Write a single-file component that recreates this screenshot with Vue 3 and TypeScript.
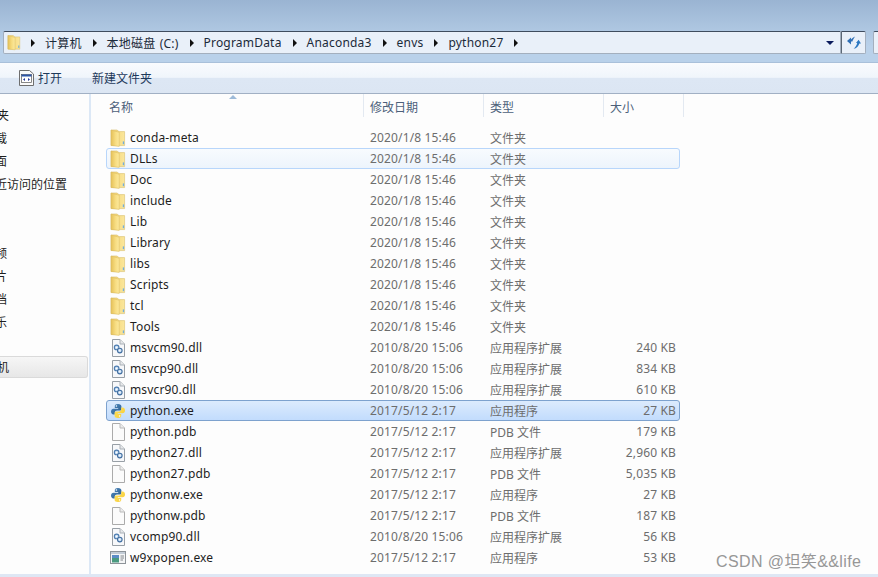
<template>
  <div class="explorer">
    <svg class="sprite" width="0" height="0" aria-hidden="true">
      <defs>
        <linearGradient id="folderFront" x1="0" y1="0" x2="1" y2="0">
          <stop offset="0" stop-color="#e6c25a" />
          <stop offset="0.55" stop-color="#f7dd82" />
          <stop offset="1" stop-color="#fdea9e" />
        </linearGradient>
        <linearGradient id="folderBack" x1="0" y1="0" x2="1" y2="0">
          <stop offset="0" stop-color="#f3d26f" />
          <stop offset="1" stop-color="#fbe79c" />
        </linearGradient>
        <linearGradient id="pyBlue" x1="0" y1="0" x2="1" y2="1">
          <stop offset="0" stop-color="#4f8cc2" />
          <stop offset="1" stop-color="#2c5a8a" />
        </linearGradient>
        <linearGradient id="pyYellow" x1="0" y1="0" x2="1" y2="1">
          <stop offset="0" stop-color="#f6cb35" />
          <stop offset="1" stop-color="#ffe25e" />
        </linearGradient>
      </defs>
      <symbol id="ic-folder" viewBox="0 0 16 18">
        <path d="M1 1 H7 L9 2.6 H14.6 V16.6 H1 Z" fill="url(#folderBack)" stroke="#d8bd6c" stroke-width=".6" />
        <path d="M1.2 1.2 L9.2 3.2 V17.4 L1.2 16.4 Z" fill="url(#folderFront)" stroke="#d9b95c" stroke-width=".5" />
        <rect x="12.8" y="12.4" width="1.3" height="2.8" fill="#73aedb" />
      </symbol>
      <symbol id="ic-page" viewBox="0 0 16 18">
        <path d="M2.5 .5 H10 L14.5 5 V17.5 H2.5 Z" fill="#fbfbfb" stroke="#ababab" />
        <path d="M10 .5 V5 H14.5" fill="#ececec" stroke="#bababa" />
      </symbol>
      <symbol id="ic-dll" viewBox="0 0 16 18">
        <path d="M2.5 .5 H10 L14.5 5 V17.5 H2.5 Z" fill="#f7f8fa" stroke="#989fa6" />
        <path d="M10 .5 V5 H14.5" fill="#e6e8ea" stroke="#aab0b6" />
        <circle cx="6.6" cy="8.4" r="2.3" fill="#cfe2f5" stroke="#4d7cb0" stroke-width="1.1" />
        <circle cx="9.8" cy="11.6" r="2.3" fill="#cfe2f5" stroke="#416ea0" stroke-width="1.1" />
        <circle cx="6.6" cy="8.4" r=".7" fill="#fff" />
        <circle cx="9.8" cy="11.6" r=".7" fill="#fff" />
      </symbol>
      <symbol id="ic-python" viewBox="0 0 16 16">
        <path d="M8 1 C5.2 1 4.8 2.2 4.8 3.4 V5 H8.2 V5.7 H3.4 C2 5.7 1 6.8 1 8.5 C1 10.3 2 11.4 3.3 11.4 H4.8 V9.8 C4.8 8.5 5.8 7.6 7 7.6 H9.8 C10.8 7.6 11.4 6.9 11.4 6 V3.3 C11.4 2 10.2 1 8 1 Z" fill="url(#pyBlue)" />
        <path transform="rotate(180 8 8)" d="M8 1 C5.2 1 4.8 2.2 4.8 3.4 V5 H8.2 V5.7 H3.4 C2 5.7 1 6.8 1 8.5 C1 10.3 2 11.4 3.3 11.4 H4.8 V9.8 C4.8 8.5 5.8 7.6 7 7.6 H9.8 C10.8 7.6 11.4 6.9 11.4 6 V3.3 C11.4 2 10.2 1 8 1 Z" fill="url(#pyYellow)" />
        <circle cx="6.4" cy="3" r=".8" fill="#fff" />
        <circle cx="9.6" cy="13" r=".8" fill="#fff" />
      </symbol>
      <symbol id="ic-window" viewBox="0 0 16 13">
        <rect x=".5" y=".5" width="15" height="12" fill="#f4f5f6" stroke="#8d9399" />
        <rect x="1" y="1" width="14" height="2" fill="#c3ccd6" />
        <rect x="2" y="4" width="7" height="7.5" fill="#4a9a80" />
        <rect x="2" y="4" width="7" height="3" fill="#5a8cc6" />
        <path d="M10.5 5 H14 M10.5 7 H14 M10.5 9 H13" stroke="#747a80" stroke-width=".9" />
      </symbol>
    </svg>

    <header class="title-bar">
      <div class="address-row">
        <div class="address">
          <svg class="addr-folder"><use href="#ic-folder" /></svg>
          <template v-for="crumb in crumbs" :key="crumb">
            <span class="crumb-arrow"></span>
            <span class="crumb">{{ crumb }}</span>
          </template>
          <span class="crumb-arrow"></span>
          <span class="addr-drop"></span>
        </div>
        <div class="refresh">
          <svg width="16" height="15" viewBox="0 0 16 15">
            <path d="M1 6 L5 2.4 V4.6 C6 3.6 7 2.6 9 1.6 C7.6 3.6 7 5 6.4 6.6 L5 6.4 V9.6 Z" fill="#2f6fb5" />
            <path d="M15 8.4 L12.6 4.8 L10 8 H11.2 C10.8 10 9.6 12 7.6 13.8 C10.6 13.2 12.6 11 13.4 8.4 Z" fill="#2b78c2" />
          </svg>
        </div>
        <div class="search"></div>
      </div>
    </header>

    <div class="toolbar">
      <span class="tool">
        <svg width="15" height="16" viewBox="0 0 15 16">
          <path d="M.5 .5 H10.5 L14.5 4 V15.5 H.5 Z" fill="#fafafa" stroke="#6e6e6e" />
          <rect x="2.5" y="4.5" width="10" height="8" fill="#fff" stroke="#555" stroke-width=".7" />
          <rect x="2.5" y="4.5" width="10" height="2" fill="#2d56a8" />
          <path d="M4 9.5 L6 8 V11 Z M11 9.5 L9 8 V11 Z" fill="#26389a" />
        </svg>
        打开
      </span>
      <span class="tool tool-new">新建文件夹</span>
    </div>

    <div class="body">
      <nav class="sidebar">
        <div
          v-for="item in navItems"
          :key="item.label"
          class="nav-item"
          :class="{ 'nav-sub': item.sub, 'nav-current': item.current, 'nav-gap': item.gap }"
        >
          <span>{{ item.label }}</span>
        </div>
      </nav>

      <main class="files">
        <div class="columns">
          <span class="sort-arrow"></span>
          <span class="col col-name">名称</span>
          <span class="col">修改日期</span>
          <span class="col">类型</span>
          <span class="col">大小</span>
        </div>
        <div class="rows">
          <div
            v-for="file in files"
            :key="file.name"
            class="row"
            :class="{ hover: file.name === 'DLLs', selected: file.name === 'python.exe' }"
          >
            <span class="cell-name">
              <svg class="file-icon" :class="'icon-' + file.icon"><use :href="'#ic-' + file.icon" /></svg>
              <span class="file-name">{{ file.name }}</span>
            </span>
            <span class="cell-num">{{ file.date }}</span>
            <span>{{ file.type }}</span>
            <span class="cell-num cell-size">{{ file.size }}</span>
          </div>
        </div>
      </main>
    </div>

    <div class="bottom-strip"></div>
    <div class="watermark">CSDN @坦笑&amp;&amp;life</div>
  </div>
</template>

<script setup lang="ts">
interface NavItem {
  label: string;
  sub?: boolean;
  current?: boolean;
  gap?: boolean;
}

interface FileRow {
  name: string;
  date: string;
  type: string;
  size: string;
  icon: string;
}

const crumbs = ["计算机", "本地磁盘 (C:)", "ProgramData", "Anaconda3", "envs", "python27"];

const navItems: NavItem[] = [
  { label: "收藏夹" },
  { label: "下载", sub: true },
  { label: "桌面", sub: true },
  { label: "最近访问的位置", sub: true },
  { label: "视频", sub: true, gap: true },
  { label: "图片", sub: true },
  { label: "文档", sub: true },
  { label: "音乐", sub: true },
  { label: "计算机", current: true }
];

const folder = (name: string): FileRow => ({
  name,
  date: "2020/1/8 15:46",
  type: "文件夹",
  size: "",
  icon: "folder"
});

const dll = (name: string, size: string): FileRow => ({
  name,
  date: "2010/8/20 15:06",
  type: "应用程序扩展",
  size,
  icon: "dll"
});

const py = "2017/5/12 2:17";

const files: FileRow[] = [
  ...["conda-meta", "DLLs", "Doc", "include", "Lib", "Library", "libs", "Scripts", "tcl", "Tools"].map(folder),
  dll("msvcm90.dll", "240 KB"),
  dll("msvcp90.dll", "834 KB"),
  dll("msvcr90.dll", "610 KB"),
  { name: "python.exe", date: py, type: "应用程序", size: "27 KB", icon: "python" },
  { name: "python.pdb", date: py, type: "PDB 文件", size: "179 KB", icon: "page" },
  { name: "python27.dll", date: py, type: "应用程序扩展", size: "2,960 KB", icon: "dll" },
  { name: "python27.pdb", date: py, type: "PDB 文件", size: "5,035 KB", icon: "page" },
  { name: "pythonw.exe", date: py, type: "应用程序", size: "27 KB", icon: "python" },
  { name: "pythonw.pdb", date: py, type: "PDB 文件", size: "187 KB", icon: "page" },
  dll("vcomp90.dll", "56 KB"),
  { name: "w9xpopen.exe", date: py, type: "应用程序", size: "53 KB", icon: "window" }
];
</script>

<style scoped>
.explorer {
  position: relative;
  width: 878px;
  height: 577px;
  overflow: hidden;
  background: #fdfdfd;
  font-family: "Noto Sans", "Noto Sans CJK SC", sans-serif;
  font-size: 12px;
  color: #1e1e1e;
}

.sprite {
  display: block;
  height: 0;
}

.title-bar {
  height: 62px;
  padding-top: 31px;
  box-sizing: border-box;
  background: linear-gradient(#9ab4d2, #b9d1ea 75%);
}

.address-row {
  display: flex;
  height: 23px;
  padding-left: 3px;
}

.address {
  display: flex;
  align-items: center;
  width: 838px;
  box-sizing: border-box;
  padding-left: 3px;
  background: #e9f0f9;
  border: 1px solid #a3afbe;
  border-top-color: #3f4c5e;
  border-radius: 2px 0 0 2px;
  color: #1b2a3a;
}

.addr-folder {
  width: 14px;
  height: 17px;
  flex: none;
  margin-right: -1px;
}

.crumb {
  white-space: nowrap;
  letter-spacing: 0.2px;
  word-spacing: 1px;
}

.crumb-arrow {
  flex: none;
  width: 0;
  height: 0;
  margin: 0 10px 0 11px;
  border-left: 4px solid #111;
  border-top: 4px solid transparent;
  border-bottom: 4px solid transparent;
}

.addr-drop {
  margin-left: auto;
  margin-right: 6px;
  width: 0;
  height: 0;
  border-top: 4px solid #0b1b5c;
  border-left: 4px solid transparent;
  border-right: 4px solid transparent;
}

.refresh {
  width: 25px;
  display: flex;
  align-items: center;
  justify-content: center;
  box-sizing: border-box;
  background: #e9f0f9;
  border: 1px solid #a3afbe;
  border-top-color: #3f4c5e;
  border-left-color: #5b6775;
  border-radius: 0 2px 2px 0;
}

.search {
  flex: 1;
  margin-left: 7px;
  background: #e9f0f9;
  border: 1px solid #a3afbe;
  border-top-color: #3f4c5e;
  border-right: 0;
  border-radius: 2px 0 0 2px;
}

.toolbar {
  display: flex;
  align-items: center;
  height: 32px;
  box-sizing: border-box;
  padding-left: 19px;
  background: linear-gradient(#f9fbfe, #f0f5fb 48%, #dde7f4 50%, #dce6f3);
  border-top: 1px solid #a9c0da;
  border-bottom: 1px solid #a1b0c4;
  color: #1e395b;
}

.tool {
  display: flex;
  align-items: center;
  gap: 4px;
}

.tool-new {
  margin-left: 30px;
}

.body {
  display: flex;
  height: 480px;
}

.sidebar {
  width: 91px;
  flex: none;
  box-sizing: border-box;
  padding-top: 10px;
  border-right: 2px solid #dce8f6;
  overflow: hidden;
}

.nav-item {
  height: 23px;
  line-height: 23px;
  white-space: nowrap;
  margin-right: 1px;
  text-indent: -27px;
}

.nav-sub {
  text-indent: -17px;
}

.nav-gap {
  margin-top: 46px;
}

.nav-current {
  margin-top: 22px;
  height: 22px;
  line-height: 21px;
  box-sizing: border-box;
  background: linear-gradient(#f6f6f6, #e7e7e7);
  border: 1px solid #dadada;
  border-left: 0;
  border-radius: 0 3px 3px 0;
}

.files {
  flex: 1;
  min-width: 0;
}

.columns {
  position: relative;
  display: grid;
  grid-template-columns: 273px 120px 120px 80px;
  height: 23px;
  margin-bottom: 10px;
  color: #4c607a;
}

.col {
  display: flex;
  align-items: center;
  height: 23px;
  padding: 3px 0 0 6px;
  box-sizing: border-box;
  border-right: 1px solid #e3e9f1;
}

.col-name {
  padding-left: 18px;
}

.sort-arrow {
  position: absolute;
  left: 138px;
  top: 1px;
  width: 0;
  height: 0;
  border-bottom: 4px solid #9dbad8;
  border-left: 4px solid transparent;
  border-right: 4px solid transparent;
}

.rows {
  margin-left: 15px;
  width: 574px;
}

.row {
  display: grid;
  grid-template-columns: 263px 120px 120px 1fr;
  align-items: center;
  height: 21px;
  box-sizing: border-box;
  padding-right: 3px;
  border: 1px solid transparent;
  border-radius: 3px;
  color: #6d6d6d;
  white-space: nowrap;
}

.row.hover {
  background: linear-gradient(#f8fbfe, #edf4fc);
  border-color: #b8d6fb;
}

.row.selected {
  background: linear-gradient(#dcebfd, #c2dcfd);
  border-color: #7da2ce;
}

.cell-name {
  display: flex;
  align-items: center;
  color: #1e1e1e;
}

.cell-num {
  letter-spacing: 0.15px;
}

.file-icon {
  width: 16px;
  height: 18px;
  flex: none;
  margin-left: 3px;
}

.icon-python {
  height: 16px;
}

.icon-window {
  height: 13px;
}

.file-name {
  margin-left: 4px;
  letter-spacing: 0.15px;
}

.cell-size {
  text-align: right;
}

.bottom-strip {
  height: 3px;
  background: #dee7f4;
}

.watermark {
  position: absolute;
  left: 716px;
  top: 548px;
  font-family: "Liberation Sans", "Noto Sans CJK SC", sans-serif;
  font-size: 16px;
  letter-spacing: 0.4px;
  color: #979797;
  white-space: nowrap;
}
</style>

<style>
html,
body {
  margin: 0;
  overflow: hidden;
}
</style>
